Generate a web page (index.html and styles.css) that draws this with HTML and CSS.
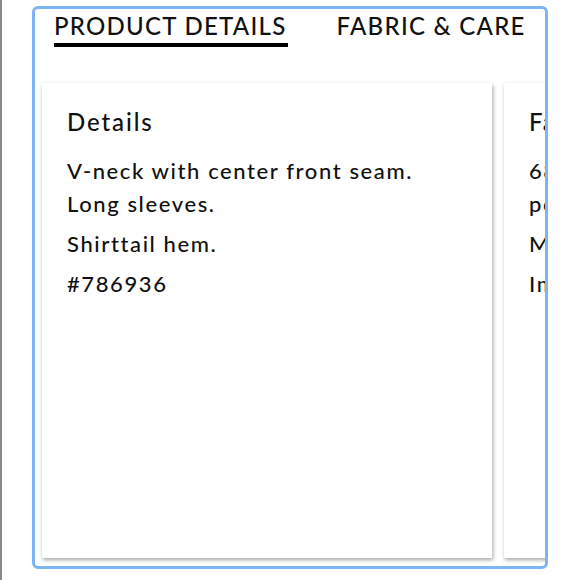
FILE: index.html
```html
<!DOCTYPE html>
<html>
<head>
<meta charset="utf-8">
<link rel="stylesheet" href="styles.css">
</head>
<body>
<div class="page">
  <div class="frame">
    <div class="tabs">
      <div class="tab active">PRODUCT DETAILS</div>
      <div class="tab">FABRIC &amp; CARE</div>
    </div>
    <div class="cards">
      <div class="card">
        <h2 class="card-title">Details</h2>
        <p class="line">V-neck with center front seam.<br>Long sleeves.</p>
        <p class="line">Shirttail hem.</p>
        <p class="line">#786936</p>
      </div>
      <div class="card">
        <h2 class="card-title">Fabric &amp; Care</h2>
        <p class="line">68% cotton, 32%<br>polyester.</p>
        <p class="line">Machine wash.</p>
        <p class="line">Imported.</p>
      </div>
    </div>
  </div>
</div>
</body>
</html>
```
FILE: styles.css
```css
html, body {
  margin: 0;
  padding: 0;
  background: #ffffff;
}
body {
  font-family: "Lato", "Open Sans", sans-serif;
  font-weight: 500;
  color: #111111;
}
.page {
  border-left: 2px solid #8a8a8a;
  height: 580px;
  box-sizing: border-box;
  padding: 6px 32px 0 30px;
}
.frame {
  width: 516px;
  height: 563px;
  box-sizing: border-box;
  border: 3px solid #7db4f5;
  border-radius: 6px;
  overflow: hidden;
  display: flex;
  flex-direction: column;
}
.tabs {
  display: flex;
  gap: 49px;
  padding: 0 0 0 19px;
  height: 74px;
  flex: none;
}
.tab {
  font-size: 24px;
  letter-spacing: 1.27px;
  line-height: 28px;
  padding-top: 3px;
  height: 31px;
  white-space: nowrap;
}
.tab.active {
  border-bottom: 4px solid #000000;
  padding-right: 1px;
}
.cards {
  display: flex;
  gap: 12px;
  padding: 0 0 0 7px;
  flex: 1;
  min-height: 0;
}
.card {
  flex: none;
  width: 450px;
  height: 475px;
  box-sizing: border-box;
  background: #ffffff;
  padding: 24px 25px;
  box-shadow: 1px 2px 4px rgba(0, 0, 0, 0.35);
}
.card-title {
  margin: 0 0 17px 0;
  font-size: 24px;
  font-weight: 500;
  letter-spacing: 1.9px;
  line-height: 30px;
}
.line {
  margin: 0 0 7px 0;
  font-size: 22px;
  line-height: 33px;
  letter-spacing: 1.6px;
  white-space: nowrap;
}
```
